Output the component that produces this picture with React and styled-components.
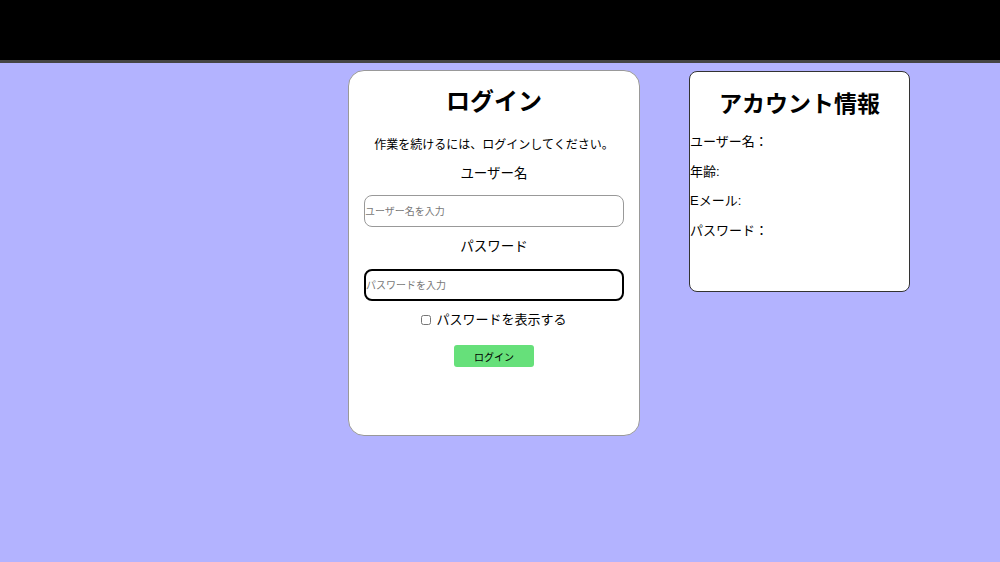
import React, { useState } from "react";
import styled, { createGlobalStyle } from "styled-components";

const Global = createGlobalStyle`
  html, body { margin: 0; padding: 0; }
  body {
    font-family: "Liberation Sans", "Noto Sans CJK JP", sans-serif;
    background: #b3b3ff;
    color: #000;
  }
`;

const TopBar = styled.div`
  height: 60px;
  background: #000;
  border-bottom: 3px solid #444;
`;

const Page = styled.div`
  min-height: 700px;
  background: #b3b3ff;
  display: flex;
  align-items: flex-start;
  padding-top: 7px;
`;

const LoginCard = styled.div`
  margin-left: 348px;
  width: 290px;
  height: 364px;
  background: #fff;
  border: 1px solid #999;
  border-radius: 16px;
  display: flex;
  flex-direction: column;
  align-items: center;

  h1 {
    font-size: 24px;
    margin: 16px 0 0;
    line-height: 30px;
  }
  p {
    font-size: 12px;
    line-height: 16px;
    margin: 20px 0 0;
  }
`;

const Label = styled.div`
  font-size: 13.5px;
  line-height: 16px;
  margin-top: ${(p) => p.$top}px;
`;

const Input = styled.input`
  width: 260px;
  height: 32px;
  box-sizing: border-box;
  margin-top: ${(p) => p.$top}px;
  border: ${(p) => (p.$focused ? "2px solid #000" : "1px solid #999")};
  border-radius: 8px;
  padding: 0;
  font-size: 10px;
  font-family: inherit;
  outline: none;
  &::placeholder { color: #777; }
`;

const CheckRow = styled.label`
  display: flex;
  align-items: center;
  gap: 5px;
  font-size: 13px;
  line-height: 16px;
  margin-top: 11px;
  input { margin: 0; width: 10px; height: 10px; }
`;

const LoginButton = styled.button`
  margin-top: 17px;
  width: 80px;
  height: 22px;
  background: #66e07a;
  border: none;
  border-radius: 3px;
  font-size: 10px;
  font-family: inherit;
`;

const InfoCard = styled.div`
  margin-left: 49px;
  margin-top: 1px;
  width: 219px;
  height: 219px;
  background: #fff;
  border: 1px solid #333;
  border-radius: 8px;

  h2 {
    text-align: center;
    font-size: 23px;
    margin: 17px 0 15px;
    line-height: 30px;
  }
`;

const InfoRow = styled.div`
  font-size: 13px;
  line-height: 16px;
  height: 29.5px;
`;

export default function App() {
  const [show, setShow] = useState(false);
  return (
    <>
      <Global />
      <TopBar />
      <Page>
        <LoginCard>
          <h1>ログイン</h1>
          <p>作業を続けるには、ログインしてください。</p>
          <Label $top={13}>ユーザー名</Label>
          <Input $top={13} placeholder="ユーザー名を入力" />
          <Label $top={12}>パスワード</Label>
          <Input $top={14} $focused type={show ? "text" : "password"} placeholder="パスワードを入力" />
          <CheckRow>
            <input type="checkbox" checked={show} onChange={() => setShow(!show)} />
            パスワードを表示する
          </CheckRow>
          <LoginButton>ログイン</LoginButton>
        </LoginCard>
        <InfoCard>
          <h2>アカウント情報</h2>
          <InfoRow>ユーザー名：</InfoRow>
          <InfoRow>年齢:</InfoRow>
          <InfoRow>Eメール:</InfoRow>
          <InfoRow>パスワード：</InfoRow>
        </InfoCard>
      </Page>
    </>
  );
}
